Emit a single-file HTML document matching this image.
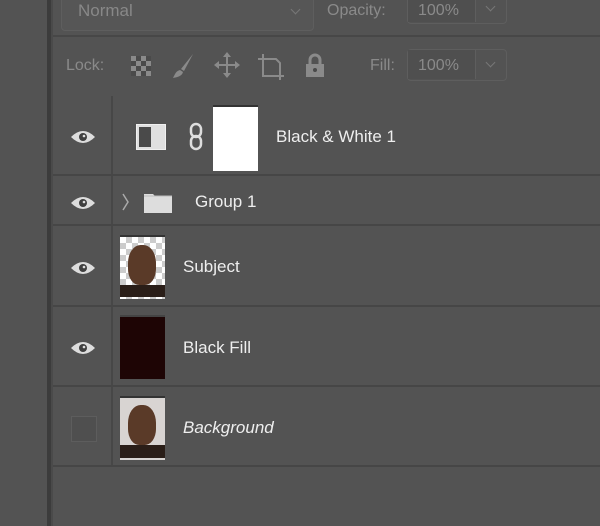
<!DOCTYPE html>
<html><head><style>
body{margin:0;width:600px;height:526px;background:#535353;position:relative;overflow:hidden;font-family:"Liberation Sans",sans-serif;}
.a{position:absolute}
.t{color:#eee;font-size:17px}
.g{color:#8a8a8a;font-size:16px}
.eye{position:absolute;left:70px;width:26px;height:14px}
.sep{position:absolute;left:53px;right:0;height:2px;background:#464646}
.vs{position:absolute;left:111px;width:2px;background:#474747}
</style></head><body>
<div class="a" style="left:47px;top:0;width:4px;height:526px;background:#3c3c3c"></div>
<div class="a" style="left:51px;top:0;width:2px;height:526px;background:#4a4a4a"></div>
<!-- top row -->
<div class="a" style="left:53px;top:35px;right:0;height:2px;background:#474747"></div>
<div class="a" style="left:61px;top:-6px;width:251px;height:35px;border:1px solid #5e5e5e;border-radius:4px;background:#565656"></div>
<div class="a g" style="left:78px;top:1px;font-size:17px;color:#888">Normal</div>
<div class="a" style="left:292px;top:6px;width:6px;height:6px;border-right:1px solid #777;border-bottom:1px solid #777;transform:rotate(45deg)"></div>
<div class="a g" style="left:327px;top:2px">Opacity:</div>
<div class="a" style="left:407px;top:-6px;width:98px;height:28px;border:1px solid #5e5e5e;border-radius:4px;background:#535353"></div>
<div class="a" style="left:408px;top:-5px;width:67px;height:27px;background:#4f4f4f;border-right:1px solid #5e5e5e"></div>
<div class="a g" style="left:418px;top:2px">100%</div>
<div class="a" style="left:487px;top:3px;width:6px;height:6px;border-right:1px solid #777;border-bottom:1px solid #777;transform:rotate(45deg)"></div>
<!-- lock row -->
<div class="a g" style="left:66px;top:57px">Lock:</div>
<svg class="a" style="left:129px;top:54px" width="24" height="24"><rect x="2" y="2" width="20" height="20" fill="#8a8a8a"/><g fill="#4a4a4a"><rect x="7" y="2" width="5" height="5"/><rect x="17" y="2" width="5" height="5"/><rect x="2" y="7" width="5" height="5"/><rect x="12" y="7" width="5" height="5"/><rect x="7" y="12" width="5" height="5"/><rect x="17" y="12" width="5" height="5"/><rect x="2" y="17" width="5" height="5"/><rect x="12" y="17" width="5" height="5"/></g></svg>
<svg class="a" style="left:170px;top:52px" width="26" height="28"><path d="M23 2 L11 17 L14 19 Z" fill="#8a8a8a"/><path d="M10 18 C6 19 5 22 3 26 C8 25 12 24 13 20 Z" fill="#8a8a8a"/></svg>
<svg class="a" style="left:214px;top:52px" width="26" height="26" fill="#8a8a8a"><rect x="12" y="3" width="2" height="20"/><rect x="3" y="12" width="20" height="2"/><path d="M13 0 L17 5 L9 5Z M13 26 L17 21 L9 21Z M0 13 L5 9 L5 17Z M26 13 L21 9 L21 17Z"/></svg>
<svg class="a" style="left:256px;top:52px" width="30" height="28" fill="none" stroke="#8a8a8a" stroke-width="2"><path d="M7 2 V24 H28"/><path d="M2 7 H20 L24 11 V28"/></svg>
<svg class="a" style="left:304px;top:52px" width="22" height="26"><path d="M6 12 V8 A5 5 0 0 1 16 8 V12" fill="none" stroke="#8a8a8a" stroke-width="3"/><rect x="2" y="12" width="18" height="13" fill="#8a8a8a"/><circle cx="11" cy="18" r="2" fill="#4a4a4a"/></svg>
<div class="a g" style="left:370px;top:57px">Fill:</div>
<div class="a" style="left:407px;top:49px;width:98px;height:30px;border:1px solid #5e5e5e;border-radius:4px;background:#535353"></div>
<div class="a" style="left:408px;top:50px;width:67px;height:29px;background:#4f4f4f;border-right:1px solid #5e5e5e"></div>
<div class="a g" style="left:418px;top:57px">100%</div>
<div class="a" style="left:487px;top:59px;width:6px;height:6px;border-right:1px solid #777;border-bottom:1px solid #777;transform:rotate(45deg)"></div>
<!-- layer rows -->
<div class="vs" style="top:96px;height:78px"></div>
<div class="vs" style="top:176px;height:290px"></div>
<div class="sep" style="top:174px"></div>
<div class="sep" style="top:224px"></div>
<div class="sep" style="top:305px"></div>
<div class="sep" style="top:385px"></div>
<div class="sep" style="top:465px"></div>
<svg class="eye" style="top:130px" viewBox="0 0 26 14"><path d="M1 7 Q13 -5 25 7 Q13 19 1 7Z" fill="#ddd"/><circle cx="13" cy="7" r="4" fill="#3f3f3f"/><circle cx="14" cy="6" r="1.3" fill="#ddd"/></svg>
<svg class="eye" style="top:196px" viewBox="0 0 26 14"><path d="M1 7 Q13 -5 25 7 Q13 19 1 7Z" fill="#ddd"/><circle cx="13" cy="7" r="4" fill="#3f3f3f"/><circle cx="14" cy="6" r="1.3" fill="#ddd"/></svg>
<svg class="eye" style="top:261px" viewBox="0 0 26 14"><path d="M1 7 Q13 -5 25 7 Q13 19 1 7Z" fill="#ddd"/><circle cx="13" cy="7" r="4" fill="#3f3f3f"/><circle cx="14" cy="6" r="1.3" fill="#ddd"/></svg>
<svg class="eye" style="top:341px" viewBox="0 0 26 14"><path d="M1 7 Q13 -5 25 7 Q13 19 1 7Z" fill="#ddd"/><circle cx="13" cy="7" r="4" fill="#3f3f3f"/><circle cx="14" cy="6" r="1.3" fill="#ddd"/></svg>
<div class="a" style="left:71px;top:416px;width:24px;height:24px;border:1px solid #5d5d5d;background:#4f4f4f"></div>
<!-- row1 -->
<div class="a" style="left:136px;top:124px;width:28px;height:24px;background:#e0e0e0;border:1px solid #f0f0f0"></div>
<div class="a" style="left:139px;top:127px;width:12px;height:20px;background:#4a4a4a"></div>
<svg class="a" style="left:187px;top:122px" width="18" height="30" fill="none" stroke="#ddd" stroke-width="2.5"><rect x="4" y="2" width="10" height="13" rx="5"/><rect x="4" y="14" width="10" height="13" rx="5"/></svg>
<div class="a" style="left:213px;top:105px;width:45px;height:64px;background:#fff;border-top:2px solid #333"></div>
<div class="a t" style="left:276px;top:127px">Black &amp; White 1</div>
<!-- row2 -->
<svg class="a" style="left:121px;top:192px" width="10" height="20"><path d="M2 2 L7 10 L2 18" fill="none" stroke="#aaa" stroke-width="1.5"/></svg>
<svg class="a" style="left:143px;top:190px" width="30" height="24"><path d="M1 4 H10 L12 6 H29 V23 H1Z" fill="#ddd"/><path d="M1 6 H29" stroke="#bbb"/></svg>
<div class="a t" style="left:195px;top:192px">Group 1</div>
<!-- row3 -->
<div class="a" style="left:120px;top:235px;width:45px;height:62px;background:repeating-conic-gradient(#ccc 0 25%,#fff 0 50%) 0 0/12px 12px;border-top:2px solid #333"></div>
<div class="a" style="left:128px;top:245px;width:28px;height:40px;border-radius:45% 45% 40% 40%;background:#5a3a28"></div>
<div class="a" style="left:120px;top:285px;width:45px;height:12px;background:#2a1e18"></div>
<div class="a t" style="left:183px;top:257px">Subject</div>
<!-- row4 -->
<div class="a" style="left:120px;top:315px;width:45px;height:62px;background:#1e0505;border-top:2px solid #444"></div>
<div class="a t" style="left:183px;top:338px">Black Fill</div>
<!-- row5 -->
<div class="a" style="left:120px;top:396px;width:45px;height:62px;background:#d8d4d2;border-top:2px solid #333"></div>
<div class="a" style="left:128px;top:405px;width:28px;height:40px;border-radius:45% 45% 40% 40%;background:#5a3a28"></div>
<div class="a" style="left:120px;top:445px;width:45px;height:13px;background:#2a1e18"></div>
<div class="a t" style="left:183px;top:418px;font-style:italic">Background</div>
</body></html>
